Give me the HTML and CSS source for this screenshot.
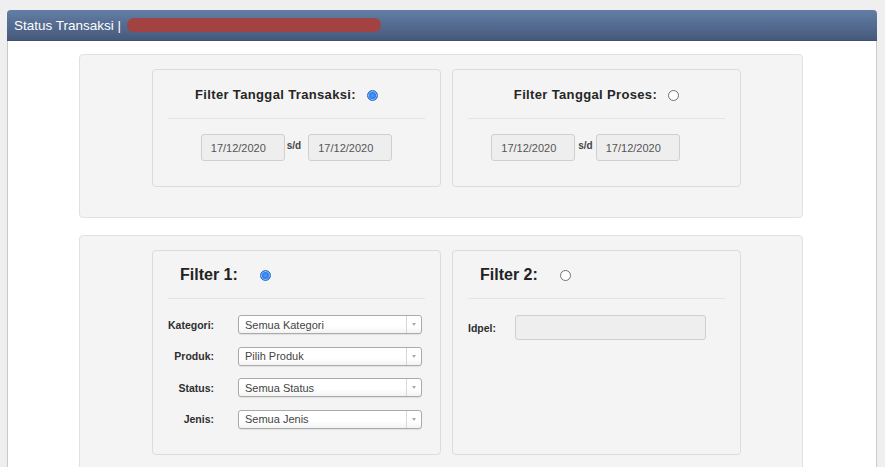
FILE: index.html
```html
<!DOCTYPE html>
<html>
<head>
<meta charset="utf-8">
<link rel="stylesheet" href="styles.css">
</head>
<body>
<div class="panel">
  <div class="panel-heading">Status Transaksi |&nbsp;<span class="redact"></span></div>
  <div class="panel-body">
    <div class="well">
      <div class="box">
        <div class="box-head center shift-left">
          <span class="title">Filter Tanggal Transaksi:</span>
          <span class="radio checked"></span>
        </div>
        <div class="dates">
          <div class="date">17/12/2020</div>
          <span class="sd">s/d</span>
          <div class="date">17/12/2020</div>
        </div>
      </div>
      <div class="box">
        <div class="box-head center">
          <span class="title">Filter Tanggal Proses:</span>
          <span class="radio"></span>
        </div>
        <div class="dates shift-dates">
          <div class="date">17/12/2020</div>
          <span class="sd narrow">s/d</span>
          <div class="date">17/12/2020</div>
        </div>
      </div>
    </div>
    <div class="well">
      <div class="box tall">
        <div class="box-head left">
          <span class="title big">Filter 1:</span>
          <span class="radio checked"></span>
        </div>
        <div class="fields">
          <div class="row"><label>Kategori:</label><div class="select"><span>Semua Kategori</span><i class="arrow"></i></div></div>
          <div class="row"><label>Produk:</label><div class="select"><span>Pilih Produk</span><i class="arrow"></i></div></div>
          <div class="row"><label>Status:</label><div class="select"><span>Semua Status</span><i class="arrow"></i></div></div>
          <div class="row"><label>Jenis:</label><div class="select"><span>Semua Jenis</span><i class="arrow"></i></div></div>
        </div>
      </div>
      <div class="box tall">
        <div class="box-head left">
          <span class="title big">Filter 2:</span>
          <span class="radio"></span>
        </div>
        <div class="idpel-row">
          <label>Idpel:</label>
          <div class="text-input"></div>
        </div>
      </div>
    </div>
  </div>
</div>
</body>
</html>
```
FILE: styles.css
```css
html, body {
  margin: 0;
  padding: 0;
}
body {
  background: #efefef;
  font-family: "Liberation Sans", Arial, sans-serif;
  color: #333;
  height: 467px;
  overflow: hidden;
}
.panel {
  margin: 10px 8px 0 7px;
  border: 1px solid #c9c9c9;
  border-bottom: none;
  border-radius: 4px 4px 0 0;
  background: #fff;
  height: 470px;
}
.panel-heading {
  height: 31px;
  margin: -1px -1px 0 -1px;
  border-radius: 4px 4px 0 0;
  background: linear-gradient(#637ea6, #46597b);
  border-bottom: 1px solid #3f5170;
  color: #fff;
  font-size: 13.5px;
  display: flex;
  align-items: center;
  padding: 0 7px;
  box-sizing: border-box;
}
.redact {
  display: inline-block;
  width: 254px;
  height: 14px;
  border-radius: 7px;
  background: #a24242;
  margin-left: 2px;
}
.panel-body {
  padding-top: 13px;
}
.well {
  width: 724px;
  box-sizing: border-box;
  margin: 0 0 17px 71px;
  background: #f4f4f4;
  border: 1px solid #e1e1e1;
  border-radius: 4px;
  padding: 14px 0 30px 72px;
  display: flex;
  gap: 11px;
}
.box {
  width: 289px;
  height: 118px;
  box-sizing: border-box;
  border: 1px solid #dcdcdc;
  border-radius: 4px;
  padding: 0 15px;
}
.box.tall {
  height: 205px;
}
.box-head {
  height: 47px;
  border-bottom: 1px solid #e4e4e4;
  display: flex;
  align-items: center;
}
.box-head.center {
  justify-content: center;
  height: 48px;
}
.box-head.shift-left {
  padding-right: 20px;
}
.box-head.left {
  padding-left: 12px;
}
.title {
  font-weight: bold;
  font-size: 13px;
  letter-spacing: 0.35px;
  color: #262626;
}
.title.big {
  font-size: 16px;
  letter-spacing: 0;
  color: #222;
}
.box-head.center .title {
  margin-right: 11px;
}
.box-head.left .title {
  margin-right: 22px;
}
.radio {
  display: inline-block;
  width: 9px;
  height: 9px;
  border-radius: 50%;
  border: 1px solid #707070;
  background: #fff;
  margin-top: 2px;
}
.radio.checked {
  border-color: #2a6ac4;
  background: radial-gradient(circle, #4b9cff 0, #2f80ee 45%, #1f63c8 100%);
  box-shadow: inset 0 0 0 1px #8cc0ff;
}
.dates {
  display: flex;
  justify-content: center;
  align-items: flex-start;
  margin-top: 15px;
}
.dates.shift-dates {
  padding-right: 22px;
}
.date {
  width: 84px;
  height: 27px;
  box-sizing: border-box;
  background: #eeeeee;
  border: 1px solid #cfcfcf;
  border-radius: 3px;
  font-size: 11px;
  color: #555;
  display: flex;
  align-items: center;
  padding-left: 9px;
}
.sd {
  font-size: 10px;
  font-weight: bold;
  color: #444;
  margin: 6px 7px 0 2px;
}
.sd.narrow {
  margin: 6px 3px 0 3px;
}
.fields {
  margin-top: 16px;
  display: flex;
  flex-direction: column;
  gap: 12.5px;
}
.row {
  display: flex;
  align-items: center;
  height: 19px;
}
.row label {
  width: 46px;
  text-align: right;
  font-size: 10.5px;
  font-weight: bold;
  color: #2e2e2e;
  margin-right: 24px;
}
.select {
  width: 184px;
  height: 19px;
  box-sizing: border-box;
  border: 1px solid #aaa;
  border-radius: 3px;
  background: linear-gradient(#ffffff 60%, #f3f3f3);
  box-shadow: 0 1px 1px rgba(0,0,0,0.08);
  display: flex;
  align-items: center;
  font-size: 11px;
  color: #444;
  padding-left: 6px;
}
.select span {
  flex: 1;
}
.select .arrow {
  width: 14px;
  height: 100%;
  border-left: 1px solid #d8d8d8;
  display: flex;
  align-items: center;
  justify-content: center;
}
.select .arrow::after {
  content: "";
  border-left: 2.5px solid transparent;
  border-right: 2.5px solid transparent;
  border-top: 3px solid #aaa;
}
.idpel-row {
  display: flex;
  align-items: center;
  margin-top: 16px;
}
.idpel-row label {
  font-size: 10.5px;
  font-weight: bold;
  color: #2e2e2e;
  width: 47px;
}
.text-input {
  width: 191px;
  height: 25px;
  box-sizing: border-box;
  background: #eeeeee;
  border: 1px solid #cfcfcf;
  border-radius: 3px;
}
```
